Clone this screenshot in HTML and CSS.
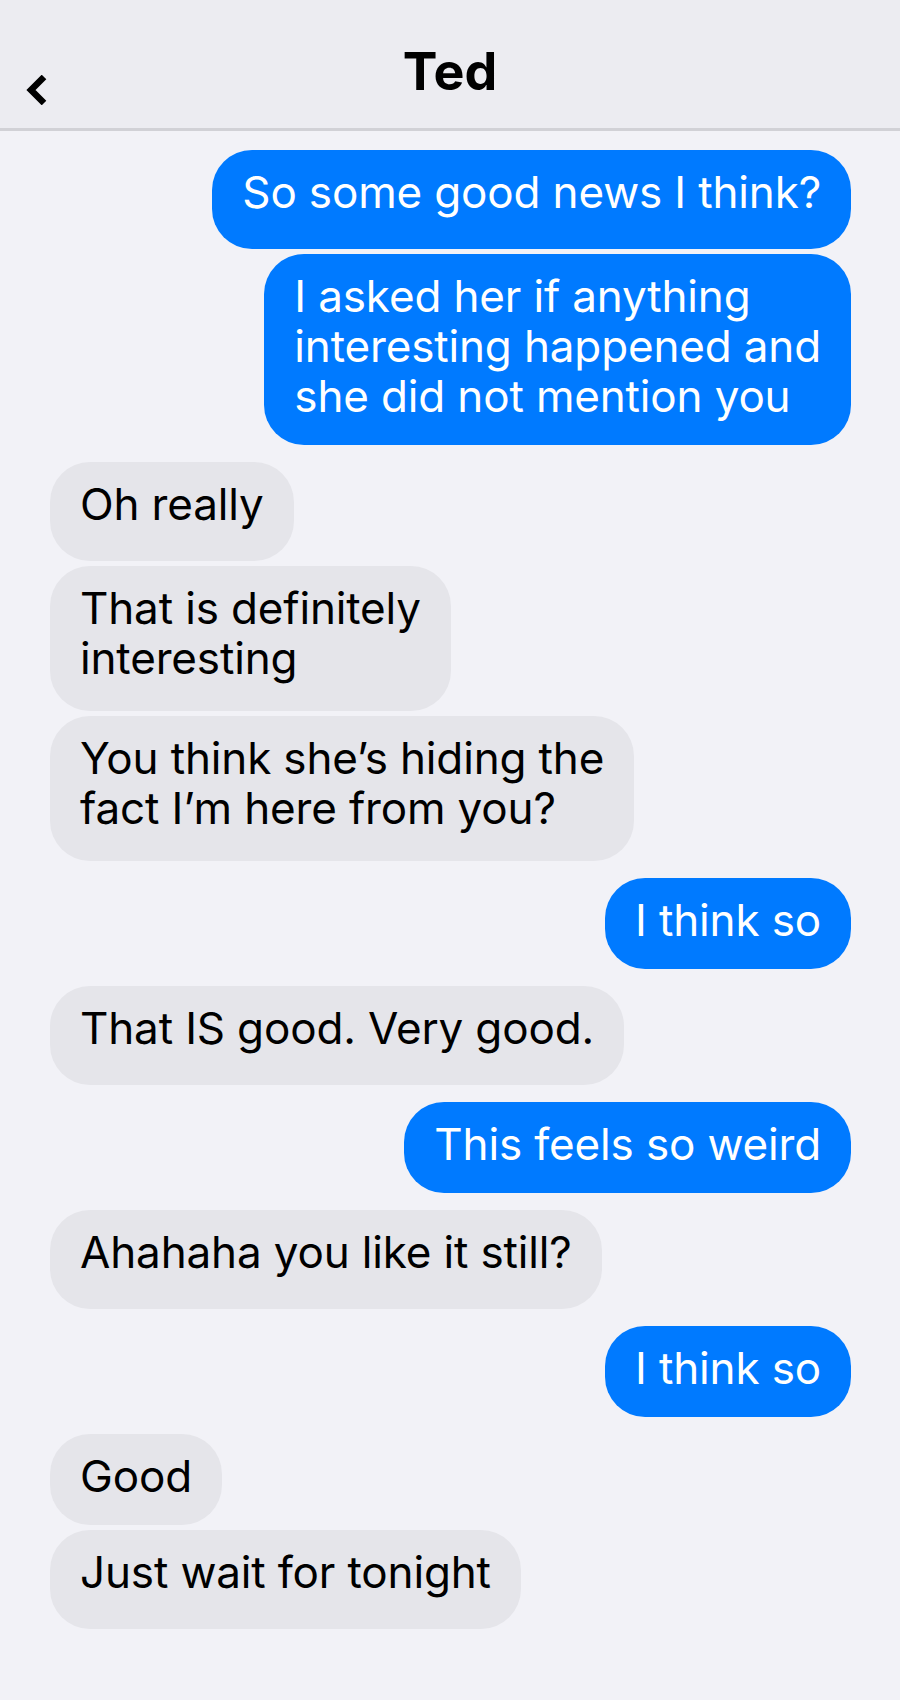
FILE: index.html
```html
<!DOCTYPE html>
<html lang="en">

<head>
    <meta charset="UTF-8">
    <meta name="viewport" content="width=device-width, initial-scale=1.0">
    <title>Ted</title>
    <link rel="stylesheet" href="styles.css">
</head>

<body>

    <!-- top bar -->
    <header class="topbar">
        <a class="back" href="#" aria-label="Back">
            <svg width="24" height="30" viewBox="0 0 24 30">
                <polyline points="19,2 6,15 19,28" fill="none" stroke="#000" stroke-width="6.5" stroke-linejoin="miter"/>
            </svg>
        </a>
        <h1 class="title">Ted</h1>
    </header>

    <!-- conversation -->
    <main class="thread">
        <div class="group me">
            <div class="bubble">So some good news I think?</div>
            <div class="bubble tall">I asked her if anything<br>interesting happened and<br>she did not mention you</div>
        </div>

        <div class="group them">
            <div class="bubble">Oh really</div>
            <div class="bubble multi">That is definitely<br>interesting</div>
            <div class="bubble multi">You think she&rsquo;s hiding the<br>fact I&rsquo;m here from you?</div>
        </div>

        <div class="group me">
            <div class="bubble flat">I think so</div>
        </div>

        <div class="group them">
            <div class="bubble">That IS good. Very good.</div>
        </div>

        <div class="group me">
            <div class="bubble flat">This feels so weird</div>
        </div>

        <div class="group them">
            <div class="bubble">Ahahaha you like it still?</div>
        </div>

        <div class="group me">
            <div class="bubble flat">I think so</div>
        </div>

        <div class="group them">
            <div class="bubble flat">Good</div>
            <div class="bubble">Just wait for tonight</div>
        </div>
    </main>

</body>

</html>
```

FILE: styles.css
```css
body {
    margin: 0;
    min-height: 1700px;
    background-color: #f2f2f7;
    font-family: "Inter", "Noto Sans", sans-serif;
    color: #000;
}

.topbar {
    position: relative;
    height: 128px;
    display: flex;
    justify-content: center;
    align-items: center;
    background-color: #ececf1;
    border-bottom: 3px solid #d1d1d6;
}

.back {
    position: absolute;
    left: 25px;
    top: 75px;
    display: block;
    line-height: 0;
}

.title {
    margin: 14px 0 0 0;
    font-size: 52px;
    font-weight: 700;
}

.thread {
    display: flex;
    flex-direction: column;
    gap: 17px;
    padding: 19px 49px 40px 50px;
}

.group {
    display: flex;
    flex-direction: column;
    gap: 5px;
}

.group.me {
    align-items: flex-end;
}

.group.them {
    align-items: flex-start;
}

.bubble {
    font-size: 44px;
    line-height: 50px;
    letter-spacing: -0.15px;
    padding: 17px 30px 32px;
    border-radius: 40px;
    white-space: nowrap;
}

.bubble.flat,
.bubble.tall {
    padding-bottom: 24px;
}

.bubble.multi {
    padding-bottom: 28px;
}

.me .bubble {
    background-color: #007aff;
    color: #fff;
}

.them .bubble {
    background-color: #e5e5ea;
    color: #000;
}
```
